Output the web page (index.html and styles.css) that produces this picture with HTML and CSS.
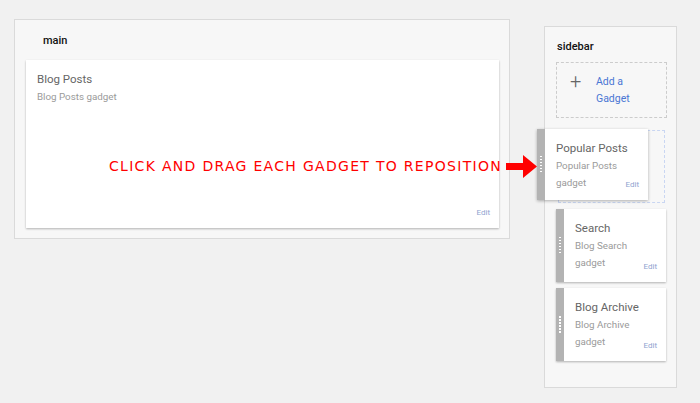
FILE: index.html
```html
<!DOCTYPE html>
<html>
<head>
<meta charset="utf-8">
<link rel="stylesheet" href="styles.css">
</head>
<body>
<div class="page">
  <section class="panel main">
    <div class="panel-label">main</div>
    <div class="card main-card">
      <div class="card-body">
        <div class="g-title">Blog Posts</div>
        <div class="g-sub">Blog Posts gadget</div>
        <div class="edit">Edit</div>
      </div>
    </div>
  </section>

  <section class="panel sidebar">
    <div class="panel-label side-label">sidebar</div>
    <div class="add-box">
      <span class="plus">+</span>
      <span class="add-text">Add a<br>Gadget</span>
    </div>
    <div class="slot">
      <div class="card gadget dragging">
        <div class="handle"><span class="grip"></span></div>
        <div class="card-body">
          <div class="g-title">Popular Posts</div>
          <div class="g-sub">Popular Posts<br>gadget</div>
          <div class="edit">Edit</div>
        </div>
      </div>
    </div>
    <div class="card gadget">
      <div class="handle"><span class="grip"></span></div>
      <div class="card-body">
        <div class="g-title">Search</div>
        <div class="g-sub">Blog Search<br>gadget</div>
        <div class="edit">Edit</div>
      </div>
    </div>
    <div class="card gadget">
      <div class="handle"><span class="grip"></span></div>
      <div class="card-body">
        <div class="g-title">Blog Archive</div>
        <div class="g-sub">Blog Archive<br>gadget</div>
        <div class="edit">Edit</div>
      </div>
    </div>
  </section>

  <div class="hint">CLICK AND DRAG EACH GADGET TO REPOSITION</div>
  <svg class="arrow" width="32" height="24" viewBox="0 0 32 24">
    <path d="M0 8H17V0L31 11.5L17 23V15H0Z" fill="#f00"/>
  </svg>
</div>
</body>
</html>
```

FILE: styles.css
```css
* { box-sizing: border-box; }

body {
  margin: 0;
  background: #f1f1f1;
  font-family: Roboto, "Liberation Sans", sans-serif;
}

.page {
  position: relative;
  display: flex;
  align-items: flex-start;
  padding: 19px 0 0 14px;
  height: 403px;
}

.panel {
  background: #f7f7f7;
  border: 1px solid #dadada;
}

.main {
  width: 496px;
  height: 220px;
  padding: 0 0 0 11px;
}

.panel-label {
  font-size: 11px;
  font-weight: 500;
  color: #111;
  line-height: 16px;
  padding: 13px 0 11px 17px;
}

.card {
  background: #fff;
  box-shadow: 0 1px 2px rgba(0,0,0,0.28);
}

.main-card {
  width: 473px;
  height: 168px;
  display: flex;
}

.card-body {
  position: relative;
  flex: 1;
  padding: 10px 6px 10px 11px;
}

.g-title {
  font-size: 11.5px;
  line-height: 18px;
  color: #666;
  white-space: nowrap;
}

.g-sub {
  font-size: 9.8px;
  line-height: 17px;
  color: #9a9a9a;
}

.edit {
  position: absolute;
  right: 9px;
  bottom: 10px;
  font-size: 8px;
  line-height: 10px;
  color: #8fa3cf;
}

.sidebar {
  position: relative;
  margin: 7px 0 0 34px;
  width: 133px;
  height: 362px;
  padding: 0 0 0 11px;
}

.side-label {
  padding: 12px 0 7px 1px;
}

.add-box {
  width: 111px;
  height: 56px;
  border: 1px dashed #ccc;
  display: flex;
  align-items: flex-start;
  padding: 10px 0 0 13px;
}

.plus {
  font-size: 20px;
  line-height: 16px;
  color: #666;
  font-weight: 300;
  width: 26px;
}

.add-text {
  font-size: 10.5px;
  line-height: 17px;
  color: #4a76d4;
}

.slot {
  position: relative;
  margin: 12px 0 6px 2px;
  width: 107px;
  height: 73px;
  border: 1px dashed #c9d6f2;
}

.gadget {
  display: flex;
  width: 110px;
  height: 73px;
  margin-bottom: 6px;
}

.handle {
  width: 8px;
  flex: none;
  background: #b3b3b3;
  display: flex;
  align-items: center;
  justify-content: center;
}

.grip {
  width: 2px;
  height: 17px;
  background: repeating-linear-gradient(to bottom, #fff 0 1.5px, transparent 1.5px 3px);
}

.dragging {
  position: absolute;
  left: -22px;
  top: -2px;
  width: 111px;
  height: 71px;
  box-shadow: 0 1px 3px rgba(0,0,0,0.3);
}

.hint {
  position: absolute;
  left: 109px;
  top: 157px;
  font-family: "DejaVu Sans", sans-serif;
  font-size: 14px;
  line-height: 18px;
  letter-spacing: 1.3px;
  color: #f00;
}

.arrow {
  position: absolute;
  left: 506px;
  top: 155px;
}
```
